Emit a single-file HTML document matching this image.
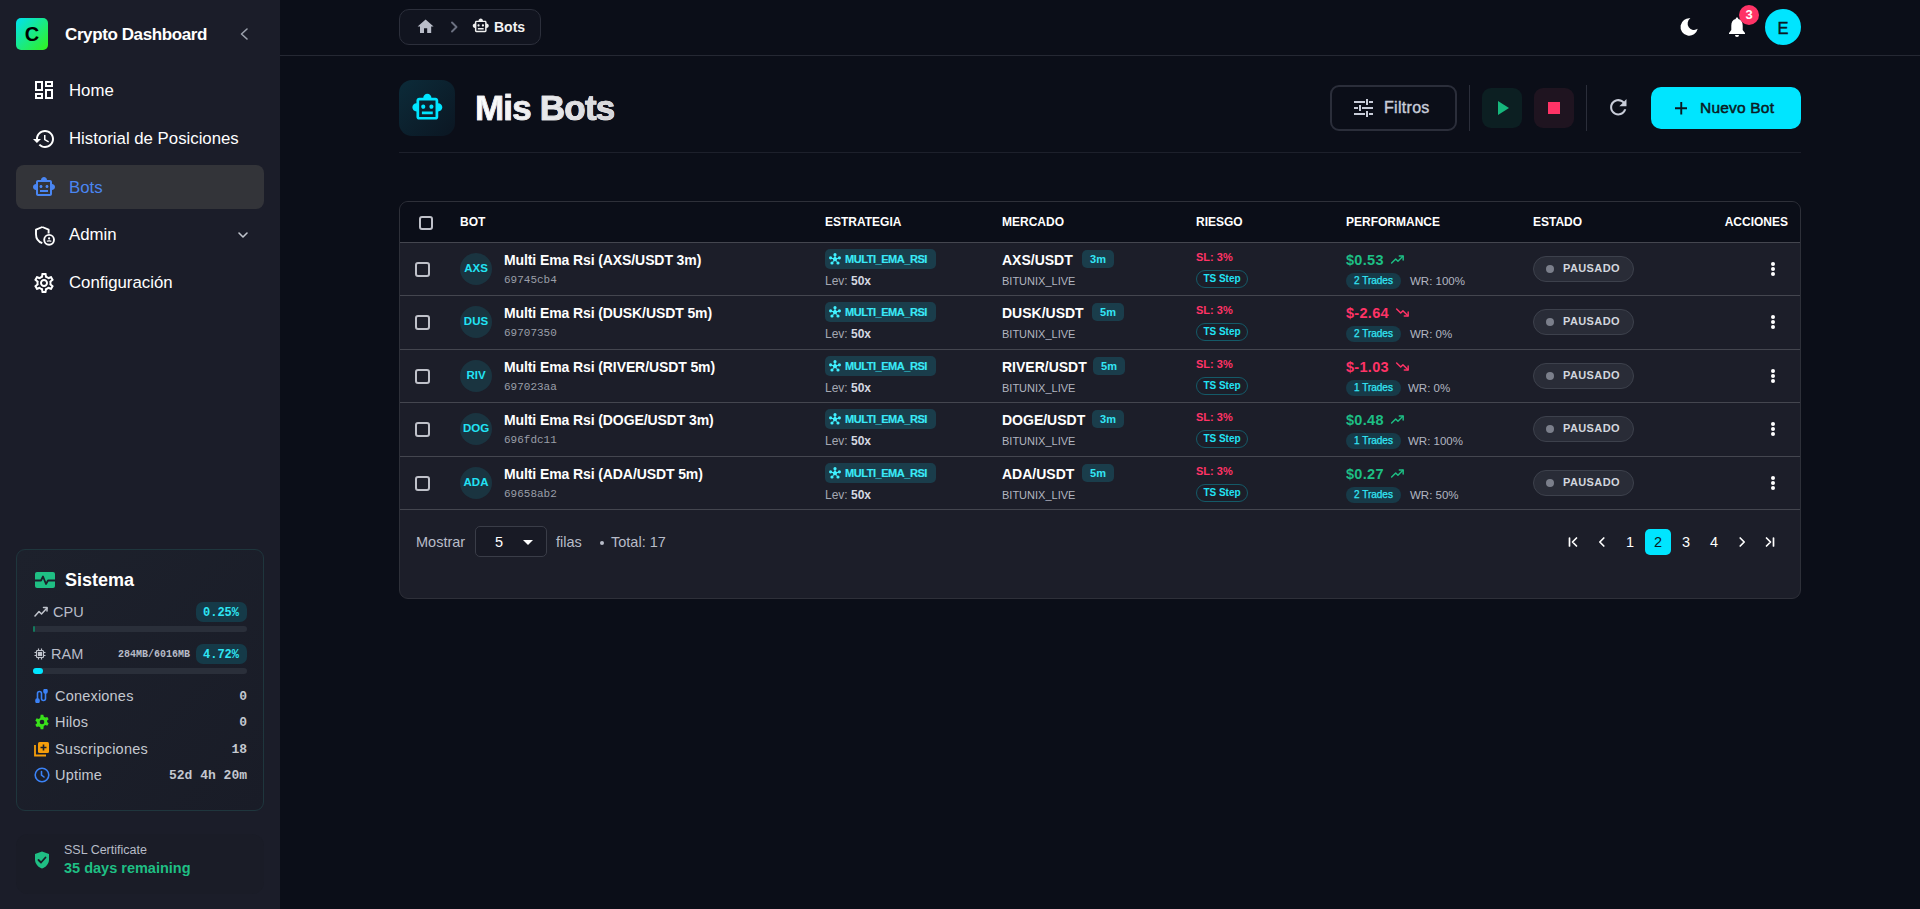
<!DOCTYPE html>
<html><head><meta charset="utf-8">
<style>
*{box-sizing:border-box;margin:0;padding:0}
html,body{width:1920px;height:909px;overflow:hidden;background:#0b0e18;font-family:"Liberation Sans",sans-serif;color:#fff}
.abs{position:absolute}
#sb{position:absolute;left:0;top:0;width:280px;height:909px;background:#1b1d29}
.logo{left:16px;top:18px;width:32px;height:32px;border-radius:5px;background:linear-gradient(135deg,#00e1f2,#32f21a);color:#000;font-weight:700;font-size:20px;text-align:center;line-height:32px}
.brand{left:65px;top:25px;font-size:17px;font-weight:700;line-height:20px;white-space:nowrap;letter-spacing:-0.4px}
.nav{left:16px;width:248px;height:44px;border-radius:8px}
.nav .ic{position:absolute;left:18px;top:12px;width:20px;height:20px}
.nav .tx{position:absolute;left:53px;top:1px;line-height:44px;font-size:16.8px;white-space:nowrap}
.nav.act{background:#333439}
.nav.act .tx{color:#4a86f2}
.card{border-radius:8px}

#tbl{position:absolute;left:399px;top:201px;width:1402px;height:398px;border:1px solid #2e3039;border-radius:9px;background:#1c1e29;overflow:hidden}
#tbl .hd{position:absolute;left:0;top:0;width:1400px;height:41px;background:#0b0e18;border-bottom:1px solid #44464f}
#tbl .th{position:absolute;top:13px;font-size:12px;font-weight:700;line-height:14px;letter-spacing:0;color:#fff}
.cb{position:absolute;width:15px;height:15px;border:2px solid #bfc1c9;border-radius:3px}
.row{position:absolute;left:0;width:1400px;border-bottom:1px solid #44464f}
.av{position:absolute;left:60px;top:10px;width:32px;height:32px;border-radius:50%;background:#1a3440;color:#22e3f5;font-size:11.5px;font-weight:700;text-align:center;line-height:30px}
.nm{position:absolute;left:104px;top:8px;font-size:14px;font-weight:700;line-height:18px;white-space:nowrap;color:#fff;letter-spacing:-0.1px}
.id{position:absolute;left:104px;top:30px;font-family:"Liberation Mono",monospace;font-size:11px;line-height:14px;color:#9a9ea8}
.sb{position:absolute;left:425px;top:6px;width:111px;height:20px;border-radius:5px;background:#1a3d4b}
.sb svg{position:absolute;left:4px;top:4px}
.sb span{position:absolute;left:20px;top:3px;font-size:11px;font-weight:700;line-height:14px;color:#3aeaf8;letter-spacing:-0.45px;-webkit-text-stroke:0.15px #3aeaf8}
.lev{position:absolute;left:425px;top:31px;font-size:12px;line-height:14px;color:#a4a8b2}
.lev b{color:#d4d8e0}
.mk{position:absolute;left:602px;top:8px;font-size:14px;font-weight:700;line-height:18px;color:#fff}
.tf{position:absolute;top:7px;width:32px;height:18px;border-radius:5px;background:#1a3d4b;color:#33e6f5;font-size:11px;font-weight:700;text-align:center;line-height:18px}
.ex{position:absolute;left:602px;top:31px;font-size:11px;line-height:14px;color:#b2b6c0}
.sl{position:absolute;left:796px;top:7px;font-size:11px;font-weight:700;line-height:14px;color:#ff3366}
.ts{position:absolute;left:796px;top:27px;width:52px;height:18px;border:1px solid #145a68;border-radius:9px;color:#22e3f5;font-size:10px;font-weight:700;text-align:center;line-height:16px}
.pf{position:absolute;left:946px;top:8px;font-size:14.5px;font-weight:700;line-height:18px;letter-spacing:0.3px;display:flex;align-items:center}
.pf span.ti{display:block;margin-left:6px;height:9px;margin-top:-2px}.pf span.ti svg{display:block}
.tr{position:absolute;left:946px;top:30px;height:16px;border-radius:8px;background:#173a48;color:#33e6f5;font-size:10px;-webkit-text-stroke:0.25px #33e6f5;line-height:16px;padding:0 8px;white-space:nowrap}
.wr{position:absolute;top:31px;font-size:11.5px;line-height:14px;color:#b2b6c0;white-space:nowrap}
.pill{position:absolute;left:1133px;top:13px;width:101px;height:26px;border:1px solid #3d414c;border-radius:13px;background:#292c37}
.pill i{position:absolute;left:12px;top:8px;width:8px;height:8px;border-radius:50%;background:#7b7f8b}
.pill span{position:absolute;left:29px;top:4px;font-size:11px;font-weight:700;line-height:14px;color:#d2d6de;letter-spacing:0.4px}
.kb{position:absolute;left:1371px;top:19px;width:4px}
.kb i{display:block;width:4px;height:4px;border-radius:50%;background:#fff;margin-bottom:1px}
.mono{font-family:"Liberation Mono",monospace}
</style></head><body>
<div id="sb">
  <div class="abs logo">C</div>
  <div class="abs brand">Crypto Dashboard</div>
  <svg class="abs" style="left:238px;top:27px" width="12" height="14" viewBox="0 0 12 14"><path d="M9 2 L3.5 7 L9 12" fill="none" stroke="#9aa0ac" stroke-width="1.6" stroke-linecap="round" stroke-linejoin="round"/></svg>

  <div class="abs nav" style="top:68px">
    <svg class="ic" viewBox="0 0 20 20" fill="none" stroke="#fff" stroke-width="2"><rect x="2" y="2" width="6" height="8"/><rect x="12" y="2" width="6" height="4"/><rect x="2" y="14" width="6" height="4"/><rect x="12" y="10" width="6" height="8"/></svg>
    <div class="tx">Home</div>
  </div>
  <div class="abs nav" style="top:116px">
    <svg class="ic" style="left:16px;top:11px;width:24px;height:24px" viewBox="0 0 24 24"><path fill="#fff" d="M13 3c-4.97 0-9 4.03-9 9H1l3.89 3.89.07.14L9 12H6c0-3.87 3.13-7 7-7s7 3.13 7 7-3.13 7-7 7c-1.93 0-3.68-.79-4.94-2.06l-1.42 1.42C8.27 19.99 10.51 21 13 21c4.97 0 9-4.03 9-9s-4.03-9-9-9zm-1 5v5l4.28 2.54.72-1.21-3.5-2.08V8H12z"/></svg>
    <div class="tx">Historial de Posiciones</div>
  </div>
  <div class="abs nav act" style="top:165px">
    <svg class="ic" style="left:16px;top:10px;width:24px;height:24px" viewBox="0 0 24 24"><path fill="#4a86f2" d="M20 9V7c0-1.1-.9-2-2-2h-3c0-1.66-1.34-3-3-3S9 3.34 9 5H6c-1.1 0-2 .9-2 2v2c-1.66 0-3 1.34-3 3s1.34 3 3 3v4c0 1.1.9 2 2 2h12c1.1 0 2-.9 2-2v-4c1.66 0 3-1.34 3-3s-1.34-3-3-3zm-2 10H6V7h12v12zm-9-6c-.83 0-1.5-.67-1.5-1.5S8.17 10 9 10s1.5.67 1.5 1.5S9.83 13 9 13zm7.5-1.5c0 .83-.67 1.5-1.5 1.5s-1.5-.67-1.5-1.5.67-1.5 1.5-1.5 1.5.67 1.5 1.5zM8 15h8v2H8v-2z"/></svg>
    <div class="tx">Bots</div>
  </div>
  <div class="abs nav" style="top:212px">
    <svg class="ic" style="left:16px;top:11px;width:24px;height:24px" viewBox="0 0 24 24"><path d="M10.3 4 L4 6.7 V11.3 C4 15.4 6.6 18.9 10.3 20.2 M10.3 4 L16.6 6.7 V10.5" fill="none" stroke="#fff" stroke-width="1.9" stroke-linejoin="round"/><circle cx="17.1" cy="16.8" r="4.9" fill="#1b1d29" stroke="#fff" stroke-width="1.9"/><circle cx="17.1" cy="15.4" r="1.1" fill="#fff"/><path d="M14.9 18.4 C15.6 17.6 18.6 17.6 19.3 18.4" stroke="#fff" stroke-width="1.3" fill="none"/></svg>
    <div class="tx">Admin</div>
    <svg class="abs" style="left:221px;top:18px" width="12" height="10" viewBox="0 0 12 10"><path d="M2 3 L6 7 L10 3" fill="none" stroke="#c0c4cc" stroke-width="1.6" stroke-linecap="round" stroke-linejoin="round"/></svg>
  </div>
  <div class="abs nav" style="top:260px">
    <svg class="ic" style="left:16px;top:11px;width:24px;height:24px" viewBox="0 0 24 24"><path fill="#fff" d="M19.43 12.98c.04-.32.07-.64.07-.98 0-.34-.03-.66-.07-.98l2.11-1.65c.19-.15.24-.42.12-.64l-2-3.46c-.09-.16-.26-.25-.44-.25-.06 0-.12.01-.17.03l-2.49 1c-.52-.4-1.08-.73-1.69-.98l-.38-2.65C14.46 2.18 14.25 2 14 2h-4c-.25 0-.46.18-.49.42l-.38 2.65c-.61.25-1.170.59-1.69.98l-2.49-1c-.06-.02-.12-.03-.18-.03-.17 0-.34.09-.43.25l-2 3.46c-.13.22-.07.49.12.64l2.11 1.65c-.04.32-.07.65-.07.98 0 .33.03.66.07.98l-2.11 1.65c-.19.15-.24.42-.12.64l2 3.46c.09.16.26.25.44.25.06 0 .12-.01.17-.03l2.49-1c.52.4 1.08.73 1.69.98l.38 2.650c.03.24.24.42.49.42h4c.25 0 .46-.18.49-.42l.38-2.65c.61-.25 1.17-.59 1.69-.98l2.49 1c.06.02.12.03.18.03.17 0 .34-.09.43-.25l2-3.46c.12-.22.07-.49-.12-.64l-2.11-1.65zm-1.98-1.71c.04.31.05.52.05.73 0 .21-.02.43-.05.73l-.14 1.13.89.7 1.08.84-.7 1.21-1.27-.51-1.04-.42-.9.68c-.43.32-.84.56-1.25.73l-1.060.43-.16 1.13-.2 1.35h-1.4l-.19-1.35-.16-1.13-1.06-.43c-.43-.18-.83-.41-1.23-.71l-.91-.7-1.06.43-1.27.51-.7-1.21 1.08-.84.89-.7-.14-1.13c-.03-.31-.05-.54-.05-.74s.02-.43.05-.73l.14-1.13-.89-.7-1.08-.84.7-1.21 1.27.51 1.04.42.9-.68c.43-.32.84-.56 1.25-.73l1.06-.43.16-1.13.2-1.35h1.39l.19 1.35.16 1.13 1.06.43c.43.18.83.41 1.23.71l.91.7 1.06-.43 1.27-.51.7 1.21-1.07.85-.89.7.14 1.13zM12 8c-2.21 0-4 1.79-4 4s1.79 4 4 4 4-1.79 4-4-1.79-4-4-4zm0 6c-1.1 0-2-.9-2-2s.9-2 2-2 2 .9 2 2-.9 2-2 2z"/></svg>
    <div class="tx">Configuración</div>
  </div>

  <div class="abs" style="left:16px;top:549px;width:248px;height:262px;border:1px solid #1f363d;border-radius:9px;background:linear-gradient(135deg,#1d212c,#191c27)"></div>
  <svg class="abs" style="left:35px;top:572px" width="20" height="16" viewBox="0 0 20 16"><rect width="20" height="16" rx="2" fill="#1fbf84"/><path d="M0 8.5H6L8 4.5L11 12L13 8.5H20" fill="none" stroke="#1b1f2a" stroke-width="1.8" stroke-linejoin="round"/></svg>
  <div class="abs" style="left:65px;top:570px;font-size:18px;font-weight:700;line-height:20px;color:#fff">Sistema</div>
  <svg class="abs" style="left:34px;top:606px" width="14" height="11" viewBox="0 0 14 11" fill="none" stroke="#c0c4cc" stroke-width="1.5" stroke-linecap="round" stroke-linejoin="round"><path d="M1 10L5 5.5L7.5 8L13 2"/><path d="M9.5 1.5H13V5"/></svg>
  <div class="abs" style="left:53px;top:604px;font-size:14.5px;line-height:16px;color:#b8bcc8">CPU</div>
  <div class="abs" style="left:196px;top:602px;width:51px;height:20px;border-radius:7px;background:#153a48"></div>
  <div class="abs mono" style="left:203px;top:606px;font-size:12px;font-weight:700;line-height:14px;color:#2ee6f5">0.25%</div>
  <div class="abs" style="left:33px;top:626px;width:214px;height:6px;border-radius:3px;background:#2a2f3a"></div>
  <div class="abs" style="left:33px;top:626px;width:2px;height:6px;border-radius:3px;background:#137a5e"></div>
  <svg class="abs" style="left:34px;top:648px" width="12" height="12" viewBox="0 0 12 12" fill="none" stroke="#c0c4cc" stroke-width="1.2"><rect x="2.5" y="2.5" width="7" height="7" rx="1"/><rect x="4.5" y="4.5" width="3" height="3" fill="#c0c4cc"/><path d="M4.5 0.5V2.5M7.5 0.5V2.5M4.5 9.5V11.5M7.5 9.5V11.5M0.5 4.5H2.5M0.5 7.5H2.5M9.5 4.5H11.5M9.5 7.5H11.5"/></svg>
  <div class="abs" style="left:51px;top:646px;font-size:14.5px;line-height:16px;color:#b8bcc8">RAM</div>
  <div class="abs mono" style="left:118px;top:649px;font-size:10px;font-weight:700;line-height:12px;color:#b8bcc8">284MB/6016MB</div>
  <div class="abs" style="left:196px;top:644px;width:51px;height:20px;border-radius:7px;background:#153a48"></div>
  <div class="abs mono" style="left:203px;top:648px;font-size:12px;font-weight:700;line-height:14px;color:#2ee6f5">4.72%</div>
  <div class="abs" style="left:33px;top:668px;width:214px;height:6px;border-radius:3px;background:#2a2f3a"></div>
  <div class="abs" style="left:33px;top:668px;width:10px;height:6px;border-radius:3px;background:#00e5ff"></div>

  <svg class="abs" style="left:35px;top:689px" width="14" height="14" viewBox="0 0 14 14" fill="none" stroke="#3b82f6" stroke-width="1.6" stroke-linecap="round"><path d="M2.5 11V4.5A2 2 0 0 1 6.5 4.5V9.5A2 2 0 0 0 10.5 9.5V3"/><rect x="1" y="10" width="3" height="3.5" rx="1.2" fill="#3b82f6"/><rect x="9" y="0.5" width="3" height="3.5" rx="1.2" fill="#3b82f6"/></svg>
  <div class="abs" style="left:55px;top:688px;font-size:14.5px;line-height:16px;color:#c4c8d0;letter-spacing:0.2px">Conexiones</div>
  <div class="abs mono" style="left:200px;top:690px;width:47px;text-align:right;font-size:13px;font-weight:700;line-height:14px;color:#c4c8d0">0</div>
  <svg class="abs" style="left:34px;top:714px" width="16" height="16" viewBox="0 0 24 24"><path fill="#39e01a" d="M10 1h4l.7 3.1 2.3 1.3 3-1 2 3.4-2.3 2.1v2.2l2.3 2.1-2 3.4-3-1-2.3 1.3L14 23h-4l-.7-3.1-2.3-1.3-3 1-2-3.4 2.3-2.1v-2.2L2 9.8l2-3.4 3 1 2.3-1.3z"/><circle cx="12" cy="12" r="3.5" fill="#1b1f2a"/></svg>
  <div class="abs" style="left:55px;top:714px;font-size:14.5px;line-height:16px;color:#c4c8d0;letter-spacing:0.2px">Hilos</div>
  <div class="abs mono" style="left:200px;top:716px;width:47px;text-align:right;font-size:13px;font-weight:700;line-height:14px;color:#c4c8d0">0</div>
  <svg class="abs" style="left:34px;top:741px" width="16" height="16" viewBox="0 0 16 16"><path d="M1 4V14.5H12" fill="none" stroke="#f59e0b" stroke-width="1.8"/><rect x="4" y="1" width="11" height="11" rx="1.5" fill="#f59e0b"/><path d="M9.5 3.5V9.5M6.5 6.5H12.5" stroke="#1b1f2a" stroke-width="1.6"/></svg>
  <div class="abs" style="left:55px;top:741px;font-size:14.5px;line-height:16px;color:#c4c8d0;letter-spacing:0.2px">Suscripciones</div>
  <div class="abs mono" style="left:180px;top:743px;width:67px;text-align:right;font-size:13px;font-weight:700;line-height:14px;color:#c4c8d0">18</div>
  <svg class="abs" style="left:34px;top:767px" width="16" height="16" viewBox="0 0 16 16" fill="none" stroke="#3b82f6" stroke-width="1.6" stroke-linecap="round"><circle cx="8" cy="8" r="6.8"/><path d="M7.5 4.5V8L10 10"/></svg>
  <div class="abs" style="left:55px;top:767px;font-size:14.5px;line-height:16px;color:#c4c8d0;letter-spacing:0.2px">Uptime</div>
  <div class="abs mono" style="left:140px;top:769px;width:107px;text-align:right;font-size:13px;font-weight:700;line-height:14px;color:#c4c8d0">52d 4h 20m</div>

  <div class="abs" style="left:16px;top:834px;width:248px;height:60px;border-radius:12px;background:#1a1c27"></div>
  <svg class="abs" style="left:34px;top:851px" width="16" height="18" viewBox="0 0 16 18"><path d="M8 0.5L15 3V8.5C15 13 11.5 16.5 8 17.5C4.5 16.5 1 13 1 8.5V3Z" fill="#1fbf84"/><path d="M4.5 9L7 11.5L11.5 6.5" fill="none" stroke="#1a1c27" stroke-width="1.8" stroke-linecap="round" stroke-linejoin="round"/></svg>
  <div class="abs" style="left:64px;top:843px;font-size:12.5px;line-height:14px;color:#b8bcc8">SSL Certificate</div>
  <div class="abs" style="left:64px;top:860px;font-size:14.5px;font-weight:700;line-height:16px;color:#1fbf84">35 days remaining</div>
</div>
<div id="main">
  <div class="abs" style="left:280px;top:55px;width:1640px;height:1px;background:#252833"></div>
  <div class="abs" style="left:399px;top:9px;width:142px;height:36px;border:1px solid #2c2f3b;border-radius:10px;background:#11141f"></div>
  <svg class="abs" style="left:416.4px;top:17.2px" width="19.2" height="19.2" viewBox="0 0 24 24"><path fill="#b9bdc9" d="M10 20v-6h4v6h5v-8h3L12 3 2 12h3v8z"/></svg>
  <svg class="abs" style="left:449px;top:21px" width="10" height="12" viewBox="0 0 10 12"><path d="M3 1.5 L7.5 6 L3 10.5" fill="none" stroke="#6b7080" stroke-width="1.9" stroke-linecap="round" stroke-linejoin="round"/></svg>
  <svg class="abs" style="left:472.3px;top:16.5px" width="17.5" height="17.5" viewBox="0 0 24 24"><path fill="#f0f0f0" d="M20 9V7c0-1.1-.9-2-2-2h-3c0-1.66-1.34-3-3-3S9 3.34 9 5H6c-1.1 0-2 .9-2 2v2c-1.66 0-3 1.34-3 3s1.34 3 3 3v4c0 1.1.9 2 2 2h12c1.1 0 2-.9 2-2v-4c1.66 0 3-1.34 3-3s-1.34-3-3-3zm-2 10H6V7h12v12zm-9-6c-.83 0-1.5-.67-1.5-1.5S8.17 10 9 10s1.5.67 1.5 1.5S9.83 13 9 13zm7.5-1.5c0 .83-.67 1.5-1.5 1.5s-1.5-.67-1.5-1.5.67-1.5 1.5-1.5 1.5.67 1.5 1.5zM8 15h8v2H8v-2z"/></svg>
  <div class="abs" style="left:494px;top:18px;font-size:14px;font-weight:700;line-height:18px;color:#f2f2f2">Bots</div>

  <svg class="abs" style="left:1678px;top:16px" width="22" height="22" viewBox="0 0 24 24"><path d="M13.5 2.5 A9.5 9.5 0 1 0 21.5 14 A7 7 0 0 1 13.5 2.5 Z" fill="#fff"/></svg>
  <svg class="abs" style="left:1727px;top:16px" width="20" height="22" viewBox="0 0 20 22"><path d="M10 1.5 C10.9 1.5 11.3 2.2 11.3 3 C14.3 3.7 15.7 6.3 15.7 9.5 V14 L18 17 V18 H2 V17 L4.3 14 V9.5 C4.3 6.3 5.7 3.7 8.7 3 C8.7 2.2 9.1 1.5 10 1.5 Z" fill="#fff"/><path d="M8 19 H12 A2 2 0 0 1 8 19 Z" fill="#fff"/></svg>
  <div class="abs" style="left:1739px;top:5px;width:20px;height:20px;border-radius:50%;background:#ff3366;color:#fff;font-size:13px;font-weight:700;text-align:center;line-height:20px">3</div>
  <div class="abs" style="left:1765px;top:9px;width:36px;height:36px;border-radius:50%;background:#00e5ff;color:#0b1a24;font-size:16.5px;font-weight:400;-webkit-text-stroke:0.4px #0b1a24;text-align:center;line-height:38px">E</div>

  <div class="abs" style="left:399px;top:80px;width:56px;height:56px;border-radius:13px;background:linear-gradient(135deg,#0c2b39,#0b1622)"></div>
  <svg class="abs" style="left:410.6px;top:91.3px" width="32.7" height="32.7" viewBox="0 0 24 24"><path fill="#00e5ff" d="M20 9V7c0-1.1-.9-2-2-2h-3c0-1.66-1.34-3-3-3S9 3.34 9 5H6c-1.1 0-2 .9-2 2v2c-1.66 0-3 1.34-3 3s1.34 3 3 3v4c0 1.1.9 2 2 2h12c1.1 0 2-.9 2-2v-4c1.66 0 3-1.34 3-3s-1.34-3-3-3zm-2 10H6V7h12v12zm-9-6c-.83 0-1.5-.67-1.5-1.5S8.17 10 9 10s1.5.67 1.5 1.5S9.83 13 9 13zm7.5-1.5c0 .83-.67 1.5-1.5 1.5s-1.5-.67-1.5-1.5.67-1.5 1.5-1.5 1.5.67 1.5 1.5zM8 15h8v2H8v-2z"/></svg>
  <div class="abs" style="left:475px;top:86px;font-size:35px;font-weight:700;line-height:44px;letter-spacing:-0.8px;background:linear-gradient(90deg,#ffffff,#d4d4d8);-webkit-background-clip:text;color:transparent;-webkit-text-stroke:0.7px #e8e8ea">Mis Bots</div>

  <div class="abs" style="left:1330px;top:85px;width:127px;height:46px;border:2px solid #2b2e3a;border-radius:9px"></div>
  <svg class="abs" style="left:1354px;top:99px" width="19" height="18" viewBox="0 0 19 18" stroke="#c8ccd8" stroke-width="2"><path d="M0 3H11M15 3H19M13 0V6M0 9H4M8 9H19M6 6V12M0 15H11M15 15H19M13 12V18"/></svg>
  <div class="abs" style="left:1384px;top:98px;font-size:16px;font-weight:400;-webkit-text-stroke:0.4px #c8ccd8;letter-spacing:0.3px;line-height:20px;color:#c8ccd8">Filtros</div>
  <div class="abs" style="left:1469px;top:85px;width:1px;height:46px;background:#2b2e3a"></div>
  <div class="abs" style="left:1482px;top:88px;width:40px;height:40px;border-radius:9px;background:#0c1f22"></div>
  <svg class="abs" style="left:1497px;top:101px" width="13" height="14" viewBox="0 0 13 14"><path d="M1 0 L12 7 L1 14 Z" fill="#16b77c"/></svg>
  <div class="abs" style="left:1534px;top:88px;width:40px;height:40px;border-radius:9px;background:#1f1420"></div>
  <div class="abs" style="left:1548px;top:102px;width:12px;height:12px;background:#ff3366"></div>
  <div class="abs" style="left:1586px;top:85px;width:1px;height:46px;background:#2b2e3a"></div>
  <svg class="abs" style="left:1605.8px;top:95px" width="24.6" height="24.6" viewBox="0 0 24 24"><path fill="#c8ccd8" d="M17.65 6.35C16.2 4.9 14.210 4 12 4c-4.42 0-7.99 3.58-7.99 8s3.57 8 7.99 8c3.73 0 6.84-2.55 7.73-6h-2.08c-.82 2.33-3.04 4-5.65 4-3.31 0-6-2.69-6-6s2.69-6 6-6c1.66 0 3.14.69 4.22 1.78L13 11h7V4l-2.35 2.35z"/></svg>
  <div class="abs" style="left:1651px;top:87px;width:150px;height:42px;border-radius:10px;background:#00e5ff"></div>
  <svg class="abs" style="left:1674.5px;top:102px" width="12.5" height="12.5" viewBox="0 0 13 13" stroke="#0b1a22" stroke-width="2"><path d="M6.5 0V13M0 6.5H13"/></svg>
  <div class="abs" style="left:1700px;top:98px;font-size:15.5px;font-weight:400;-webkit-text-stroke:0.5px #0b1a22;letter-spacing:0.2px;line-height:20px;color:#0b1a22">Nuevo Bot</div>

  <div class="abs" style="left:399px;top:152px;width:1402px;height:1px;background:#1d202b"></div>
<div id="tbl">
<div class="hd"><div class="cb" style="left:19px;top:14px;width:14px;height:14px"></div><div class="th" style="left:60px">BOT</div><div class="th" style="left:425px">ESTRATEGIA</div><div class="th" style="left:602px">MERCADO</div><div class="th" style="left:796px">RIESGO</div><div class="th" style="left:946px">PERFORMANCE</div><div class="th" style="left:1133px">ESTADO</div><div class="th" style="right:12px">ACCIONES</div></div>
<div class="row" style="top:41px;height:53px"><div class="cb" style="left:15px;top:19px"></div><div class="av">AXS</div><div class="nm">Multi Ema Rsi (AXS/USDT 3m)</div><div class="id">69745cb4</div><div class="sb"><svg width="12" height="12" viewBox="0 0 12 12" fill="#40f0ff"><circle cx="6" cy="1.7" r="1.6"/><circle cx="1.6" cy="4.8" r="1.6"/><circle cx="10.4" cy="4.8" r="1.6"/><circle cx="3" cy="10" r="1.6"/><circle cx="9" cy="10" r="1.6"/><path d="M6 3.6L8.4 5.4L7.5 8.2H4.5L3.6 5.4Z"/><path d="M6 1.7V5M1.6 4.8L5 6M10.4 4.8L7 6M3 10L5 7.5M9 10L7 7.5" stroke="#40f0ff" stroke-width="1"/></svg><span>MULTI_EMA_RSI</span></div><div class="lev">Lev: <b>50x</b></div><div class="mk">AXS/USDT</div><div class="tf" style="left:682px">3m</div><div class="ex">BITUNIX_LIVE</div><div class="sl">SL: 3%</div><div class="ts">TS Step</div><div class="pf" style="color:#1dbf84">$0.53<span class="ti"><svg width="15" height="9" viewBox="0 0 15 10" fill="none" stroke="#1dbf84" stroke-width="1.6" stroke-linecap="round" stroke-linejoin="round"><path d="M1 9 L5.5 4.5 L8 7 L13.5 1.5"/><path d="M9.5 1.2 H13.8 V5.5"/></svg></span></div><div class="tr">2 Trades</div><div class="wr" style="left:1010px">WR: 100%</div><div class="pill"><i></i><span>PAUSADO</span></div><div class="kb"><i></i><i></i><i></i></div></div>
<div class="row" style="top:94px;height:54px"><div class="cb" style="left:15px;top:19px"></div><div class="av">DUS</div><div class="nm">Multi Ema Rsi (DUSK/USDT 5m)</div><div class="id">69707350</div><div class="sb"><svg width="12" height="12" viewBox="0 0 12 12" fill="#40f0ff"><circle cx="6" cy="1.7" r="1.6"/><circle cx="1.6" cy="4.8" r="1.6"/><circle cx="10.4" cy="4.8" r="1.6"/><circle cx="3" cy="10" r="1.6"/><circle cx="9" cy="10" r="1.6"/><path d="M6 3.6L8.4 5.4L7.5 8.2H4.5L3.6 5.4Z"/><path d="M6 1.7V5M1.6 4.8L5 6M10.4 4.8L7 6M3 10L5 7.5M9 10L7 7.5" stroke="#40f0ff" stroke-width="1"/></svg><span>MULTI_EMA_RSI</span></div><div class="lev">Lev: <b>50x</b></div><div class="mk">DUSK/USDT</div><div class="tf" style="left:692px">5m</div><div class="ex">BITUNIX_LIVE</div><div class="sl">SL: 3%</div><div class="ts">TS Step</div><div class="pf" style="color:#ff3366">$-2.64<span class="ti"><svg width="15" height="9" viewBox="0 0 15 10" fill="none" stroke="#ff3366" stroke-width="1.6" stroke-linecap="round" stroke-linejoin="round"><path d="M1 1 L5.5 5.5 L8 3 L13.5 8.5"/><path d="M9.5 8.8 H13.8 V4.5"/></svg></span></div><div class="tr">2 Trades</div><div class="wr" style="left:1010px">WR: 0%</div><div class="pill"><i></i><span>PAUSADO</span></div><div class="kb"><i></i><i></i><i></i></div></div>
<div class="row" style="top:148px;height:53px"><div class="cb" style="left:15px;top:19px"></div><div class="av">RIV</div><div class="nm">Multi Ema Rsi (RIVER/USDT 5m)</div><div class="id">697023aa</div><div class="sb"><svg width="12" height="12" viewBox="0 0 12 12" fill="#40f0ff"><circle cx="6" cy="1.7" r="1.6"/><circle cx="1.6" cy="4.8" r="1.6"/><circle cx="10.4" cy="4.8" r="1.6"/><circle cx="3" cy="10" r="1.6"/><circle cx="9" cy="10" r="1.6"/><path d="M6 3.6L8.4 5.4L7.5 8.2H4.5L3.6 5.4Z"/><path d="M6 1.7V5M1.6 4.8L5 6M10.4 4.8L7 6M3 10L5 7.5M9 10L7 7.5" stroke="#40f0ff" stroke-width="1"/></svg><span>MULTI_EMA_RSI</span></div><div class="lev">Lev: <b>50x</b></div><div class="mk">RIVER/USDT</div><div class="tf" style="left:693px">5m</div><div class="ex">BITUNIX_LIVE</div><div class="sl">SL: 3%</div><div class="ts">TS Step</div><div class="pf" style="color:#ff3366">$-1.03<span class="ti"><svg width="15" height="9" viewBox="0 0 15 10" fill="none" stroke="#ff3366" stroke-width="1.6" stroke-linecap="round" stroke-linejoin="round"><path d="M1 1 L5.5 5.5 L8 3 L13.5 8.5"/><path d="M9.5 8.8 H13.8 V4.5"/></svg></span></div><div class="tr">1 Trades</div><div class="wr" style="left:1008px">WR: 0%</div><div class="pill"><i></i><span>PAUSADO</span></div><div class="kb"><i></i><i></i><i></i></div></div>
<div class="row" style="top:201px;height:54px"><div class="cb" style="left:15px;top:19px"></div><div class="av">DOG</div><div class="nm">Multi Ema Rsi (DOGE/USDT 3m)</div><div class="id">696fdc11</div><div class="sb"><svg width="12" height="12" viewBox="0 0 12 12" fill="#40f0ff"><circle cx="6" cy="1.7" r="1.6"/><circle cx="1.6" cy="4.8" r="1.6"/><circle cx="10.4" cy="4.8" r="1.6"/><circle cx="3" cy="10" r="1.6"/><circle cx="9" cy="10" r="1.6"/><path d="M6 3.6L8.4 5.4L7.5 8.2H4.5L3.6 5.4Z"/><path d="M6 1.7V5M1.6 4.8L5 6M10.4 4.8L7 6M3 10L5 7.5M9 10L7 7.5" stroke="#40f0ff" stroke-width="1"/></svg><span>MULTI_EMA_RSI</span></div><div class="lev">Lev: <b>50x</b></div><div class="mk">DOGE/USDT</div><div class="tf" style="left:692px">3m</div><div class="ex">BITUNIX_LIVE</div><div class="sl">SL: 3%</div><div class="ts">TS Step</div><div class="pf" style="color:#1dbf84">$0.48<span class="ti"><svg width="15" height="9" viewBox="0 0 15 10" fill="none" stroke="#1dbf84" stroke-width="1.6" stroke-linecap="round" stroke-linejoin="round"><path d="M1 9 L5.5 4.5 L8 7 L13.5 1.5"/><path d="M9.5 1.2 H13.8 V5.5"/></svg></span></div><div class="tr">1 Trades</div><div class="wr" style="left:1008px">WR: 100%</div><div class="pill"><i></i><span>PAUSADO</span></div><div class="kb"><i></i><i></i><i></i></div></div>
<div class="row" style="top:255px;height:53px"><div class="cb" style="left:15px;top:19px"></div><div class="av">ADA</div><div class="nm">Multi Ema Rsi (ADA/USDT 5m)</div><div class="id">69658ab2</div><div class="sb"><svg width="12" height="12" viewBox="0 0 12 12" fill="#40f0ff"><circle cx="6" cy="1.7" r="1.6"/><circle cx="1.6" cy="4.8" r="1.6"/><circle cx="10.4" cy="4.8" r="1.6"/><circle cx="3" cy="10" r="1.6"/><circle cx="9" cy="10" r="1.6"/><path d="M6 3.6L8.4 5.4L7.5 8.2H4.5L3.6 5.4Z"/><path d="M6 1.7V5M1.6 4.8L5 6M10.4 4.8L7 6M3 10L5 7.5M9 10L7 7.5" stroke="#40f0ff" stroke-width="1"/></svg><span>MULTI_EMA_RSI</span></div><div class="lev">Lev: <b>50x</b></div><div class="mk">ADA/USDT</div><div class="tf" style="left:682px">5m</div><div class="ex">BITUNIX_LIVE</div><div class="sl">SL: 3%</div><div class="ts">TS Step</div><div class="pf" style="color:#1dbf84">$0.27<span class="ti"><svg width="15" height="9" viewBox="0 0 15 10" fill="none" stroke="#1dbf84" stroke-width="1.6" stroke-linecap="round" stroke-linejoin="round"><path d="M1 9 L5.5 4.5 L8 7 L13.5 1.5"/><path d="M9.5 1.2 H13.8 V5.5"/></svg></span></div><div class="tr">2 Trades</div><div class="wr" style="left:1010px">WR: 50%</div><div class="pill"><i></i><span>PAUSADO</span></div><div class="kb"><i></i><i></i><i></i></div></div>
</div>
<div class="abs" style="left:416px;top:534px;font-size:14.5px;line-height:16px;color:#b8bcc8">Mostrar</div>
<div class="abs" style="left:475px;top:526px;width:72px;height:31px;border:1px solid #3a3d48;border-radius:5px;background:#181a25"></div>
<div class="abs" style="left:495px;top:534px;font-size:14.5px;line-height:16px;color:#fff">5</div>
<svg class="abs" style="left:523px;top:540px" width="10" height="5" viewBox="0 0 10 5"><path d="M0 0H10L5 5Z" fill="#fff"/></svg>
<div class="abs" style="left:556px;top:534px;font-size:14.5px;line-height:16px;color:#b8bcc8">filas</div>
<div class="abs" style="left:600px;top:541px;width:4px;height:4px;border-radius:50%;background:#b8bcc8"></div>
<div class="abs" style="left:611px;top:534px;font-size:14.5px;line-height:16px;color:#b8bcc8">Total: 17</div>
<svg class="abs" style="left:1567px;top:536px" width="12" height="12" viewBox="0 0 12 12" fill="none" stroke="#fff" stroke-width="1.7" stroke-linecap="round" stroke-linejoin="round"><path d="M2.5 2V10M9.5 2L5.5 6L9.5 10"/></svg>
<svg class="abs" style="left:1596px;top:536px" width="12" height="12" viewBox="0 0 12 12" fill="none" stroke="#fff" stroke-width="1.7" stroke-linecap="round" stroke-linejoin="round"><path d="M7.8 2L3.8 6L7.8 10"/></svg>
<div class="abs" style="left:1617px;top:534px;width:26px;font-size:14.5px;line-height:16px;color:#fff;text-align:center">1</div>
<div class="abs" style="left:1645px;top:529px;width:26px;height:26px;border-radius:5px;background:#00e5ff;font-size:14.5px;line-height:26px;color:#0b1a22;text-align:center">2</div>
<div class="abs" style="left:1673px;top:534px;width:26px;font-size:14.5px;line-height:16px;color:#fff;text-align:center">3</div>
<div class="abs" style="left:1701px;top:534px;width:26px;font-size:14.5px;line-height:16px;color:#fff;text-align:center">4</div>
<svg class="abs" style="left:1736px;top:536px" width="12" height="12" viewBox="0 0 12 12" fill="none" stroke="#fff" stroke-width="1.7" stroke-linecap="round" stroke-linejoin="round"><path d="M4.2 2L8.2 6L4.2 10"/></svg>
<svg class="abs" style="left:1764px;top:536px" width="12" height="12" viewBox="0 0 12 12" fill="none" stroke="#fff" stroke-width="1.7" stroke-linecap="round" stroke-linejoin="round"><path d="M9.5 2V10M2.5 2L6.5 6L2.5 10"/></svg>
</div>
</body></html>
